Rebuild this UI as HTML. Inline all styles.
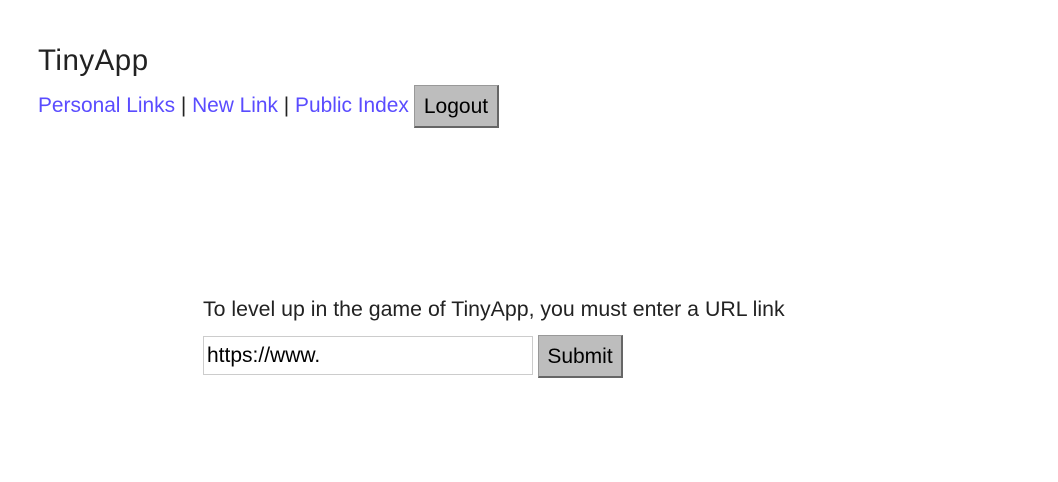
<!DOCTYPE html>
<html><head><style>
body{margin:0;background:#fff;font-family:"Liberation Sans",sans-serif;color:#222;}
.abs{position:absolute;white-space:nowrap;}
a{color:#5a4cff;text-decoration:none;}
.btn{position:absolute;background:#bdbdbd;border:1px solid #999;border-right:2px solid #666;border-bottom:2px solid #666;box-sizing:border-box;color:#000;font-size:21px;text-align:center;}
</style></head><body>
<div class="abs" style="left:38px;top:44px;font-size:29.5px;letter-spacing:0.5px;color:#222">TinyApp</div>
<div class="abs" style="left:38px;top:94px;font-size:20.9px;color:#222"><a>Personal Links</a> | <a>New Link</a> | <a>Public Index</a></div>
<div class="btn" style="left:414px;top:85px;width:85px;height:43px;line-height:41px">Logout</div>
<div class="abs" style="left:203px;top:297px;font-size:21.3px;color:#222">To level up in the game of TinyApp, you must enter a URL link</div>
<div class="abs" style="left:203px;top:336px;width:330px;height:39px;border:1px solid #ccc;box-sizing:border-box;font-size:21px;color:#000;line-height:37px;padding-left:3px">https://www.</div>
<div class="btn" style="left:538px;top:335px;width:85px;height:43px;line-height:41px">Submit</div>
</body></html>
